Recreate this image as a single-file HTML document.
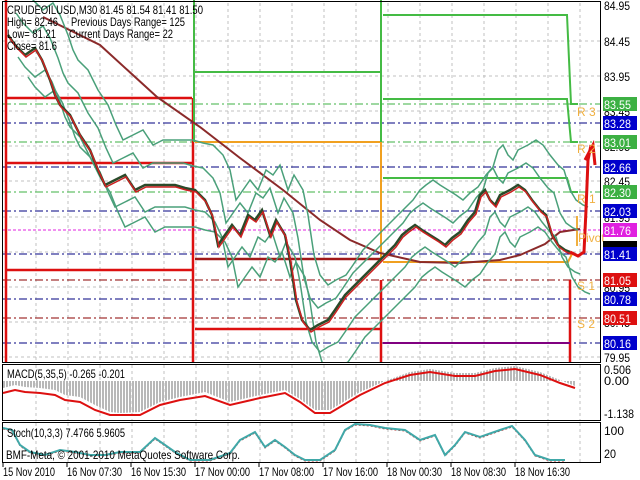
<!DOCTYPE html>
<html><head><meta charset="utf-8"><style>
html,body{margin:0;padding:0;background:#fff;}
svg{display:block;font-family:"Liberation Sans",sans-serif;}
</style></head><body>
<svg width="640" height="480" viewBox="0 0 640 480" xmlns="http://www.w3.org/2000/svg">
<defs>
<pattern id="bars" width="3" height="10" patternUnits="userSpaceOnUse"><rect x="0" y="0" width="2" height="10" fill="#b8b8b8"/></pattern>
<path id="px" d="M8,35 L15,45 L25,55 L35,48 L42,60 L50,80 L55,95 L60,105 L70,115 L80,135 L90,150 L98,170 L105,185 L115,180 L125,175 L135,190 L145,185 L160,185 L175,185 L185,188 L195,190 L205,200 L212,215 L218,245 L225,235 L232,225 L240,235 L248,215 L255,220 L262,210 L270,235 L276,220 L285,235 L290,260 L296,300 L302,320 L310,330 L318,325 L328,320 L335,310 L345,295 L355,285 L365,275 L375,265 L385,255 L395,245 L402,235 L408,230 L415,225 L422,230 L430,235 L438,240 L445,245 L452,238 L460,232 L468,220 L475,212 L480,195 L485,190 L490,200 L495,205 L500,195 L510,190 L518,185 L525,190 L532,200 L540,210 L546,215 L552,235 L558,245 L565,250 L570,252"/>
<clipPath id="mc"><rect x="3" y="0" width="597" height="362"/></clipPath>
</defs>
<rect width="640" height="480" fill="#fff"/>
<g stroke="#c0c0c0" stroke-dasharray="3,3" stroke-width="1">
<path d="M36,3V362M68,3V362M100,3V362M132,3V362M164,3V362M196,3V362M228,3V362M260,3V362M292,3V362M324,3V362M356,3V362M388,3V362M420,3V362M452,3V362M484,3V362M516,3V362M548,3V362M580,3V362"/>
<path d="M3,41H600M3,76H600M3,111H600M3,146H600M3,181H600M3,217H600M3,252H600M3,287H600M3,322H600M3,357H600"/>
<path d="M36,365V420M68,365V420M100,365V420M132,365V420M164,365V420M196,365V420M228,365V420M260,365V420M292,365V420M324,365V420M356,365V420M388,365V420M420,365V420M452,365V420M484,365V420M516,365V420M548,365V420M580,365V420"/>
<path d="M36,423V462M68,423V462M100,423V462M132,423V462M164,423V462M196,423V462M228,423V462M260,423V462M292,423V462M324,423V462M356,423V462M388,423V462M420,423V462M452,423V462M484,423V462M516,423V462M548,423V462M580,423V462"/>
</g>
<g stroke-width="1" stroke-dasharray="8,3,2,3">
<path d="M3,104H600M3,142H600M3,192H600" stroke="#3cb043"/>
<path d="M3,123H600M3,167H600M3,211H600M3,254H600M3,299H600M3,343H600" stroke="#000080"/>
<path d="M3,230H600" stroke="#e020e0" stroke-dasharray="3,2"/>
<path d="M3,280H600M3,318H600" stroke="#8b0000"/>
</g>
<g clip-path="url(#mc)" fill="none">
<path d="M6,0V362M6,98H192M6,163H192M6,270H192M193,98V362" stroke="#dd1010" stroke-width="2.5"/>
<path d="M195,329H380M381,280V362M570,280V362" stroke="#dd1010" stroke-width="2.5"/>
<path d="M195,259H380" stroke="#a01818" stroke-width="2.5"/>
<path d="M383,343H570" stroke="#800080" stroke-width="2"/>
<path d="M194,0V142M195,72H380M381,0V178M383,15H567L571,104H578M383,99H567L571,142H578M383,178H567L571,192H578" stroke="#44bb44" stroke-width="2"/>
<path d="M195,142H380M381,142V262M383,262H568L572,254" stroke="#f0a020" stroke-width="2"/>
<path d="M577,246V216" stroke="#f0b040" stroke-width="2"/>
<path d="M43,17 L100,45 L157,97 L200,127 L240,158 L283,190 L320,220 L350,240 L380,253 L420,262 L460,263 L500,260 L520,255 L545,244 L560,232 L580,229" stroke="#8b2a2a" stroke-width="2"/>
<use href="#px" transform="translate(8,-22)" stroke="#4aa07a" stroke-width="1.5"/>
<use href="#px" transform="translate(10,22)" stroke="#4aa07a" stroke-width="1.5"/>
<use href="#px" transform="translate(18,-45)" stroke="#4aa07a" stroke-width="1.5"/>
<use href="#px" transform="translate(20,42)" stroke="#4aa07a" stroke-width="1.5"/>
<use href="#px" stroke="#2a4a2a" stroke-width="2.5"/>
<use href="#px" transform="translate(1,2)" stroke="#cc2020" stroke-width="1.5"/>
<path d="M570,252 L578,256 L584,252 L586,210 L588,160 L591,145" stroke="#dd1010" stroke-width="3"/>
<path d="M585,160 L593,145 L595,165" stroke="#dd1010" stroke-width="3"/>
</g>
<g fill="#f0b040" font-size="12">
<text x="577" y="116">R 3</text><text x="577" y="153">R 2</text><text x="577" y="203">R 1</text>
<text x="578" y="242">Pivot</text><text x="577" y="290">S 1</text><text x="577" y="328">S 2</text>
</g>
<g font-size="12" fill="#000">
<text x="7" y="14" textLength="196" lengthAdjust="spacingAndGlyphs">CRUDEOILUSD,M30  81.45 81.54 81.41 81.50</text>
<text x="7" y="26" textLength="51" lengthAdjust="spacingAndGlyphs">High= 82.46</text><text x="71" y="26" textLength="114" lengthAdjust="spacingAndGlyphs">Previous Days Range= 125</text>
<text x="7" y="38" textLength="49" lengthAdjust="spacingAndGlyphs">Low= 81.21</text><text x="69" y="38" textLength="104" lengthAdjust="spacingAndGlyphs">Current Days Range= 22</text>
<text x="7" y="50" textLength="50" lengthAdjust="spacingAndGlyphs">Close= 81.6</text>
</g>
<g fill="none" stroke="#000" stroke-width="1">
<rect x="2.5" y="1.5" width="598" height="361"/>
<rect x="2.5" y="364.5" width="598" height="56"/>
<rect x="2.5" y="422.5" width="598" height="40"/>
</g>
<g font-size="12" fill="#000">
<text x="604" y="10" textLength="26" lengthAdjust="spacingAndGlyphs">84.95</text><text x="604" y="46" textLength="26" lengthAdjust="spacingAndGlyphs">84.45</text><text x="604" y="81" textLength="26" lengthAdjust="spacingAndGlyphs">83.95</text>
<text x="604" y="116" textLength="26" lengthAdjust="spacingAndGlyphs">83.45</text><text x="604" y="151" textLength="26" lengthAdjust="spacingAndGlyphs">82.95</text><text x="604" y="186" textLength="26" lengthAdjust="spacingAndGlyphs">82.45</text>
<text x="604" y="222" textLength="26" lengthAdjust="spacingAndGlyphs">81.95</text><text x="604" y="292" textLength="26" lengthAdjust="spacingAndGlyphs">80.95</text><text x="604" y="327" textLength="26" lengthAdjust="spacingAndGlyphs">80.45</text>
<text x="604" y="362" textLength="26" lengthAdjust="spacingAndGlyphs">79.95</text>
</g>
<g font-size="12" fill="#fff">
<rect x="603" y="97" width="34" height="14" fill="#3cb043"/><text x="604" y="109" textLength="27" lengthAdjust="spacingAndGlyphs">83.55</text>
<rect x="603" y="116" width="34" height="14" fill="#0000cc"/><text x="604" y="128" textLength="27" lengthAdjust="spacingAndGlyphs">83.28</text>
<rect x="603" y="135" width="34" height="14" fill="#3cb043"/><text x="604" y="147" textLength="27" lengthAdjust="spacingAndGlyphs">83.01</text>
<rect x="603" y="160" width="34" height="14" fill="#0000cc"/><text x="604" y="172" textLength="27" lengthAdjust="spacingAndGlyphs">82.66</text>
<rect x="603" y="185" width="34" height="14" fill="#3cb043"/><text x="604" y="197" textLength="27" lengthAdjust="spacingAndGlyphs">82.30</text>
<rect x="603" y="204" width="34" height="14" fill="#0000cc"/><text x="604" y="216" textLength="27" lengthAdjust="spacingAndGlyphs">82.03</text>
<rect x="603" y="223" width="34" height="14" fill="#e020e0"/><text x="604" y="235" textLength="27" lengthAdjust="spacingAndGlyphs">81.76</text>
<rect x="603" y="241" width="34" height="8" fill="#000"/>
<rect x="603" y="247" width="34" height="14" fill="#0000cc"/><text x="604" y="259" textLength="27" lengthAdjust="spacingAndGlyphs">81.41</text>
<rect x="603" y="273" width="34" height="14" fill="#dd1010"/><text x="604" y="285" textLength="27" lengthAdjust="spacingAndGlyphs">81.05</text>
<rect x="603" y="292" width="34" height="14" fill="#0000cc"/><text x="604" y="304" textLength="27" lengthAdjust="spacingAndGlyphs">80.78</text>
<rect x="603" y="311" width="34" height="14" fill="#dd1010"/><text x="604" y="323" textLength="27" lengthAdjust="spacingAndGlyphs">80.51</text>
<rect x="603" y="336" width="34" height="14" fill="#0000cc"/><text x="604" y="348" textLength="27" lengthAdjust="spacingAndGlyphs">80.16</text>
</g>
<path d="M3,381 L3,388 L15,385 L25,387 L40,388 L55,390 L65,395 L80,397 L95,405 L110,412 L120,413 L140,412 L160,402 L180,397 L205,392 L230,402 L260,395 L285,390 L300,399 L315,410 L330,410 L360,392 L385,381 L410,372 L430,369 L455,373 L475,373 L495,368 L515,366 L540,372 L560,380 L575,386 L575,381 Z" fill="url(#bars)"/>
<path d="M3,393 L15,390 L25,392 L40,393 L55,395 L65,400 L80,402 L95,410 L110,415 L120,415 L140,415 L160,405 L180,400 L205,396 L230,405 L260,398 L285,393 L300,402 L315,413 L330,413 L360,395 L385,383 L410,375 L430,372 L455,376 L475,376 L495,371 L515,369 L540,375 L560,383 L575,388" fill="none" stroke="#dd1010" stroke-width="2"/>
<g font-size="12" fill="#000">
<text x="7" y="378" textLength="118" lengthAdjust="spacingAndGlyphs">MACD(5,35,5) -0.265 -0.201</text>
<text x="604" y="374" textLength="27" lengthAdjust="spacingAndGlyphs">0.506</text><text x="604" y="385" textLength="25" lengthAdjust="spacingAndGlyphs">0.00</text><text x="604" y="418" textLength="30" lengthAdjust="spacingAndGlyphs">-1.138</text>
</g>
<path d="M3,429 L12,431 L20,446 L30,453 L45,456 L60,451 L75,453 L90,456 L105,456 L120,453 L140,453 L155,439 L165,446 L175,453 L190,461 L210,461 L230,454 L240,441 L255,433 L265,448 L275,441 L285,448 L295,456 L305,461 L320,461 L335,451 L345,431 L355,425 L370,426 L385,429 L405,431 L420,441 L435,436 L445,456 L455,446 L465,433 L480,438 L500,431 L512,427 L525,441 L535,456 L550,461 L565,461" fill="none" stroke="#c03030" stroke-width="1" stroke-dasharray="2,2"/>
<path d="M3,428 L12,430 L20,445 L30,452 L45,455 L60,450 L75,452 L90,455 L105,455 L120,452 L140,452 L155,438 L165,445 L175,452 L190,460 L210,460 L230,453 L240,440 L255,432 L265,447 L275,440 L285,447 L295,455 L305,460 L320,460 L335,450 L345,430 L355,424 L370,425 L385,428 L405,430 L420,440 L435,435 L445,455 L455,445 L465,432 L480,437 L500,430 L512,426 L525,440 L535,455 L550,460 L565,460" fill="none" stroke="#40a8a8" stroke-width="2"/>
<g font-size="12" fill="#000">
<text x="7" y="197" display="none"></text>
<text x="7" y="437" textLength="118" lengthAdjust="spacingAndGlyphs">Stoch(10,3,3) 7.4766 5.9605</text>
<text x="6" y="459" textLength="234" lengthAdjust="spacingAndGlyphs">BMF-Meta, © 2001-2010 MetaQuotes Software Corp.</text>
<text x="604" y="435" textLength="20" lengthAdjust="spacingAndGlyphs">100</text><text x="604" y="458" textLength="12" lengthAdjust="spacingAndGlyphs">20</text>
</g>
<g stroke="#000"><path d="M3,462V467M67,462V467M131,462V467M195,462V467M259,462V467M323,462V467M387,462V467M451,462V467M515,462V467"/></g>
<g font-size="12" fill="#000">
<text x="3" y="476" textLength="52" lengthAdjust="spacingAndGlyphs">15 Nov 2010</text><text x="67" y="476" textLength="55" lengthAdjust="spacingAndGlyphs">16 Nov 07:30</text><text x="131" y="476" textLength="55" lengthAdjust="spacingAndGlyphs">16 Nov 15:30</text>
<text x="195" y="476" textLength="55" lengthAdjust="spacingAndGlyphs">17 Nov 00:00</text><text x="259" y="476" textLength="55" lengthAdjust="spacingAndGlyphs">17 Nov 08:00</text><text x="323" y="476" textLength="55" lengthAdjust="spacingAndGlyphs">17 Nov 16:00</text>
<text x="387" y="476" textLength="55" lengthAdjust="spacingAndGlyphs">18 Nov 00:30</text><text x="451" y="476" textLength="55" lengthAdjust="spacingAndGlyphs">18 Nov 08:30</text><text x="515" y="476" textLength="55" lengthAdjust="spacingAndGlyphs">18 Nov 16:30</text>
</g>
</svg>
</body></html>
